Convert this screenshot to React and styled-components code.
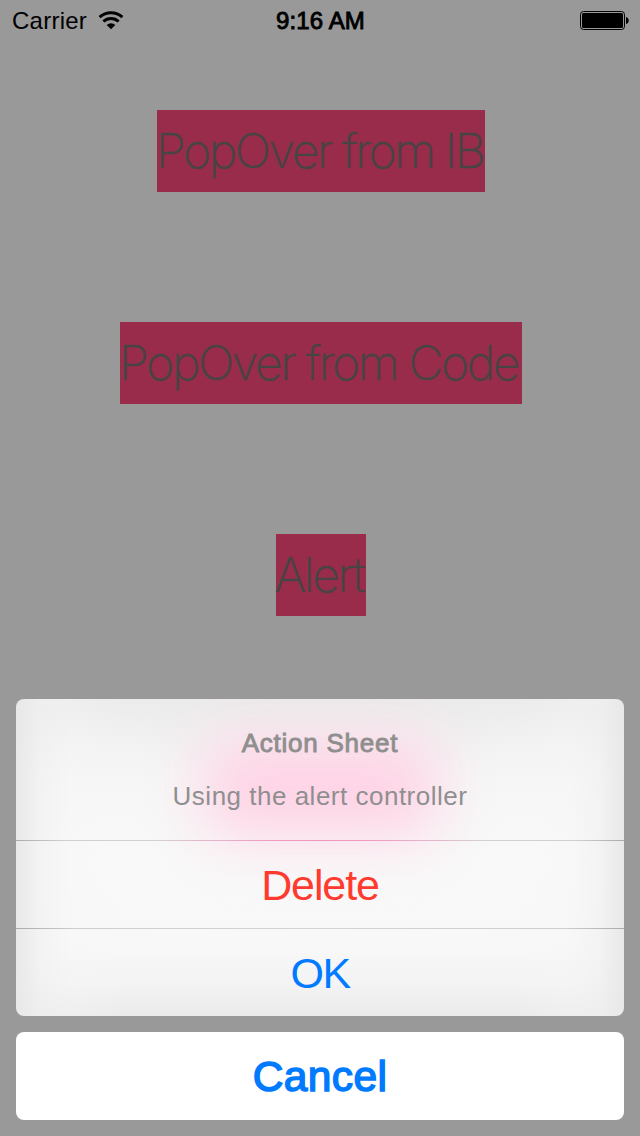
import React from "react";
import styled, { createGlobalStyle } from "styled-components";

const Global = createGlobalStyle`
  body { margin: 0; background: #999; }
  * { box-sizing: border-box; }
  button { border: 0; padding: 0; margin: 0; background: none; font: inherit; }
`;

const Screen = styled.div`
  width: 640px;
  height: 1136px;
  display: flex;
  flex-direction: column;
  overflow: hidden;
  background: #999;
  font-family: "Liberation Sans", Arial, sans-serif;
  color: #000;
`;

const StatusBar = styled.header`
  height: 40px;
  display: grid;
  grid-template-columns: 1fr auto 1fr;
  align-items: center;
  padding: 1px 11px 0 12px;
  font-size: 24px;
`;

const Carrier = styled.div`
  display: flex;
  align-items: center;
  gap: 11px;
  letter-spacing: 0.25px;
`;

const Time = styled.div`
  -webkit-text-stroke: 0.9px #000;
  letter-spacing: 0.1px;
`;

const BatterySlot = styled.div`
  display: flex;
  justify-content: flex-end;
`;

const Content = styled.main`
  height: 659px;
  padding: 70px 0 0 2px;
  display: flex;
  flex-direction: column;
  align-items: center;
  gap: 130px;
`;

const PinkButton = styled.button`
  && {
    width: ${(p) => p.$width}px;
    height: 82px;
    flex: none;
    display: flex;
    justify-content: flex-start;
    background: #982c4a;
    color: #464444;
    font-family: Inter, "Liberation Sans", sans-serif;
    font-weight: 200;
    font-size: 48px;
    letter-spacing: ${(p) => p.$tracking}px;
    line-height: 81px;
    text-indent: ${(p) => p.$indent}px;
    white-space: nowrap;
    -webkit-text-stroke: 0.4px #464444;
  }
`;

const Sheet = styled.section`
  position: relative;
  isolation: isolate;
  margin: 0 16px;
  height: 317px;
  flex: none;
  border-radius: 8px;
  overflow: hidden;
  background:
    linear-gradient(90deg, #e8e8e8, rgba(240, 240, 240, 0.6) 4%, rgba(246, 246, 246, 0.3) 9%, rgba(250, 250, 250, 0) 18%, rgba(250, 250, 250, 0) 82%, rgba(246, 246, 246, 0.3) 91%, rgba(240, 240, 240, 0.6) 96%, #e8e8e8),
    linear-gradient(180deg, #ebebeb, #f1f1f1 12%, #f6f6f6 24%, #f9f9f9 50%, #f8f8f8 78%, #f3f3f3 90%, #ebebeb);

  &::before {
    content: "";
    position: absolute;
    z-index: -1;
    left: 188px;
    top: 42px;
    width: 232px;
    height: 94px;
    border-radius: 20px;
    background: #ffd2e5;
    filter: blur(30px);
  }
`;

const SheetHeader = styled.div`
  height: 141px;
  padding-top: 28px;
  text-align: center;
  font-size: 26px;
  line-height: 32px;
  color: #8f8f8f;
`;

const SheetTitle = styled.div`
  -webkit-text-stroke: 0.9px #8f8f8f;
  letter-spacing: 0.75px;
`;

const SheetMessage = styled.div`
  margin-top: 21px;
  letter-spacing: 0.5px;
`;

const Divider = styled.div`
  height: 1px;
  background: ${(p) =>
    p.$tinted
      ? "linear-gradient(90deg, #aaa, #cfcfd0 8%, #d3d1d5 22%, #ef9fc3 40%, #f094be 50%, #ef9fc3 60%, #d3d1d5 78%, #cfcfd0 92%, #aaa)"
      : "linear-gradient(90deg, #aaa, #cecece 10%, #d4d4d4 50%, #cecece 90%, #aaa)"};
`;

const Action = styled.button`
  display: block;
  width: 100%;
  height: 87px;
  && {
    font-size: 43px;
    letter-spacing: ${(p) => p.$tracking}px;
    line-height: 89px;
  }
  color: ${(p) => p.$color};
`;

const Cancel = styled.button`
  && {
    margin: 16px 16px 0;
    height: 88px;
    flex: none;
    border-radius: 8px;
    background: #fff;
    color: #007aff;
    font-size: 42.5px;
    line-height: 90px;
    letter-spacing: 0.4px;
    -webkit-text-stroke: 1.5px #007aff;
  }
`;

const WifiIcon = () => (
  <svg width="26" height="19" viewBox="0 0 26 19">
    <g fill="none" stroke="#000" strokeWidth="3">
      <path d="M1.6 6.1 A16.8 16.8 0 0 1 24.4 6.1" />
      <path d="M5.4 10.5 A11 11 0 0 1 20.6 10.5" />
    </g>
    <path d="M13 18.2 L8.7 14 A6.2 6.2 0 0 1 17.3 14 Z" />
  </svg>
);

const BatteryIcon = () => (
  <svg width="49" height="19" viewBox="0 0 49 19">
    <rect x="0.5" y="0.5" width="44" height="18" rx="3" fill="none" stroke="#000" />
    <rect x="2" y="2" width="41" height="15" rx="1.5" />
    <path d="M46 6 C49.6 6.5 49.6 12.5 46 13 Z" />
  </svg>
);

export default function App() {
  return (
    <Screen>
      <Global />
      <StatusBar>
        <Carrier>
          <span>Carrier</span>
          <WifiIcon />
        </Carrier>
        <Time>9:16 AM</Time>
        <BatterySlot>
          <BatteryIcon />
        </BatterySlot>
      </StatusBar>
      <Content>
        <PinkButton $width={328} $tracking={-2.35} $indent={-1}>PopOver from IB</PinkButton>
        <PinkButton $width={402} $tracking={-2.3} $indent={-1}>PopOver from Code</PinkButton>
        <PinkButton $width={90} $tracking={-2.3} $indent={-1.5}>Alert</PinkButton>
      </Content>
      <Sheet>
        <SheetHeader>
          <SheetTitle>Action Sheet</SheetTitle>
          <SheetMessage>Using the alert controller</SheetMessage>
        </SheetHeader>
        <Divider $tinted />
        <Action $color="#ff3b30" $tracking={-1.1}>Delete</Action>
        <Divider />
        <Action $color="#007aff" $tracking={-1.6}>OK</Action>
      </Sheet>
      <Cancel>Cancel</Cancel>
    </Screen>
  );
}
